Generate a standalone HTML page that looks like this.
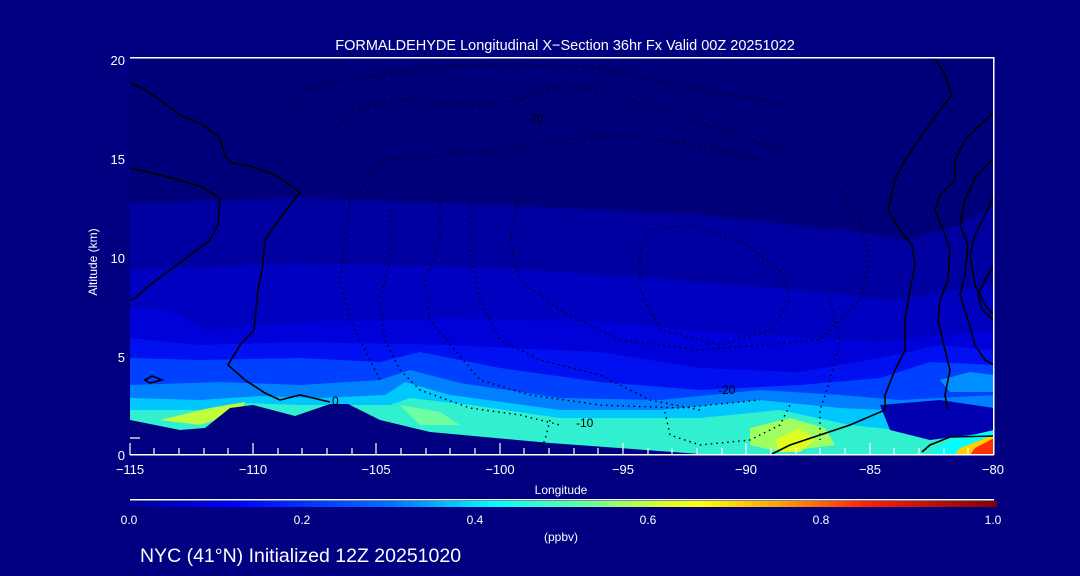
<!DOCTYPE html>
<html><head><meta charset="utf-8"><style>
html,body{margin:0;padding:0;background:#000080;width:1080px;height:576px;overflow:hidden}
svg{display:block}
text{font-family:"Liberation Sans",sans-serif;fill:#fff}
</style></head><body>
<svg width="1080" height="576" viewBox="0 0 1080 576" xmlns="http://www.w3.org/2000/svg">
<defs>
<linearGradient id="cb" x1="0" x2="1" y1="0" y2="0">
<stop offset="0" stop-color="#000090"/>
<stop offset="0.12" stop-color="#0000ff"/>
<stop offset="0.3" stop-color="#0070ff"/>
<stop offset="0.42" stop-color="#00ffff"/>
<stop offset="0.52" stop-color="#60ffa0"/>
<stop offset="0.62" stop-color="#e0ff20"/>
<stop offset="0.66" stop-color="#ffff00"/>
<stop offset="0.75" stop-color="#ffa000"/>
<stop offset="0.85" stop-color="#ff2000"/>
<stop offset="1" stop-color="#800000"/>
</linearGradient>
<clipPath id="pc"><rect x="130" y="58" width="864" height="397"/></clipPath>
</defs>
<rect width="1080" height="576" fill="#000080"/>
<g clip-path="url(#pc)">
<rect x="130" y="58" width="864" height="397" fill="#00007a"/>
<path d="M130 203 L300 198 L500 205 L700 215 L860 232 L905 240 L960 225 L994 205 L994 455 L130 455Z" fill="#0000a0"/>
<path d="M130 270 L300 263 L500 268 L650 278 L800 290 L890 300 L994 285 L994 455 L130 455Z" fill="#0000c0"/>
<path d="M130 308 L170 310 L210 330 L300 322 L450 318 L600 322 L750 335 L880 342 L994 330 L994 455 L130 455Z" fill="#0000d8"/>
<path d="M130 338 L200 345 L300 342 L450 345 L600 352 L700 368 L800 372 L880 358 L940 345 L994 350 L994 455 L130 455Z" fill="#0010f0"/>
<path d="M130 358 L200 360 L300 358 L380 362 L420 352 L500 368 L600 382 L700 390 L800 385 L880 378 L930 362 L994 365 L994 455 L130 455Z" fill="#0040ff"/>
<path d="M940 380 L970 372 L994 375 L994 392 L950 392Z" fill="#0090ff"/>
<path d="M130 385 L220 382 L300 385 L380 380 L410 370 L460 383 L560 398 L660 400 L760 390 L840 395 L900 400 L994 395 L994 455 L130 455Z" fill="#0080ff"/>
<path d="M130 398 L200 400 L260 396 L320 398 L385 395 L405 382 L450 395 L560 410 L660 410 L760 400 L840 408 L994 415 L994 455 L130 455Z" fill="#00c8ff"/>
<path d="M130 410 L200 410 L245 403 L300 405 L340 405 L390 405 L410 398 L470 405 L560 418 L700 418 L780 410 L850 425 L994 440 L994 455 L130 455Z" fill="#30f0d0"/>
<path d="M160 420 L210 408 L245 402 L240 412 L200 425Z" fill="#c0ff40"/>
<path d="M400 405 L440 412 L460 425 L420 425Z" fill="#70ffa0"/>
<path d="M750 428 L790 418 L825 428 L835 445 L780 452 L750 445Z" fill="#a0ff60"/>
<path d="M775 440 L800 428 L815 440 L800 452 L780 452Z" fill="#e0ff20"/>
<path d="M880 405 L940 400 L994 408 L994 432 L930 440 L890 430Z" fill="#0000b0"/>
<path d="M950 440 L994 430 L994 455 L930 455Z" fill="#00ffff"/>
<path d="M960 448 L994 435 L994 455 L955 455Z" fill="#ffd000"/>
<path d="M975 448 L994 438 L994 455 L970 455Z" fill="#ff3000"/>
<path d="M130 420 L180 430 L205 428 L230 408 L253 405 L295 416 L330 404 L348 404 L380 420 L430 432 L550 443 L700 454 L994 454 L994 460 L130 460Z" fill="#000080"/>
<g fill="none" stroke="#000" stroke-width="1.6">
<path d="M130 83 L142 88 L153 95 L180 115 L203 125 L220 138 L225 156 L232 163 L250 166 L275 175 L300 192 L290 205 L275 225 L265 240 L262 270 L258 290 L254 330 L240 345 L228 365 L245 380 L265 393 L280 400 L300 395 L330 402"/>
<path d="M130 168 L160 175 L200 186 L220 198 L218 225 L210 240 L190 255 L170 270 L150 285 L135 298 L130 300"/>
<path d="M935 58 L945 75 L952 95 L940 110 L922 135 L905 160 L895 180 L888 210 L900 230 L912 245 L915 265 L910 290 L905 320 L905 350 L895 370 L885 395 L885 410"/>
<path d="M994 112 L980 125 L965 140 L955 160 L955 180 L940 195 L935 210 L945 235 L950 250 L948 280 L940 300 L938 320 L945 350 L950 370 L945 395 L948 410"/>
<path d="M994 158 L975 178 L965 200 L960 225 L968 245 L965 275 L960 295 L968 320 L975 345 L985 360 L994 365"/>
<path d="M994 195 L985 215 L975 235 L970 255 L975 285 L985 305 L994 315"/>
<path d="M994 265 L985 280 L978 295 L982 310 L994 320"/>
<path d="M885 410 L850 425 L790 445 L770 455"/>
<path d="M994 436 L950 437 L930 445 L922 452"/>
<path d="M145 380 L152 376 L162 380 L150 383Z"/>
</g>
<g fill="none" stroke="#000" stroke-width="1.4" stroke-dasharray="1.5 4">
<path d="M280 120 L300 92 L350 78 L400 72 L450 65 L520 64 L600 68 L700 90 L790 105"/>
<path d="M330 140 L350 110 L400 100 L480 105 L520 100 L560 85 L600 90 L660 110 L720 130 L780 150"/>
<path d="M360 190 L380 160 L440 155 L500 150 L560 140 L620 135 L700 145 L760 160"/>
<path d="M350 200 L345 240 L340 280 L350 320 L365 350 L380 380"/>
<path d="M390 210 L390 260 L380 300 L385 340 L400 370 L420 390 L470 408 L520 415 L560 425"/>
<path d="M440 200 L440 240 L425 280 L430 320 L455 350 L480 380 L530 395 L600 405 L680 408 L760 400"/>
<path d="M470 200 L470 250 L480 300 L500 340 L540 360 L600 375 L650 400 L700 410"/>
<path d="M520 190 L510 240 L520 280 L560 310 L620 340 L700 350 L760 345 L820 340 L860 300 L870 260 L860 220 L840 190 L820 170"/>
<path d="M640 250 L650 230 L690 225 L740 240 L780 270 L790 300 L770 330 L720 345 L660 330 L640 290Z"/>
<path d="M550 420 L545 440 L540 450"/>
<path d="M665 412 L670 435 L700 445 L750 440 L780 425 L790 405"/>
<path d="M830 300 L840 340 L830 380 L820 410 L820 440"/>
</g>
</g>
<g font-size="12">
<text x="332" y="405" style="fill:#000">0</text>
<text x="576" y="427" style="fill:#000">-10</text>
<text x="718" y="394" style="fill:#000">-20</text>
<text x="526" y="123" style="fill:#000">-70</text>
</g>
<rect x="130" y="57" width="864" height="1.5" fill="#fff"/>
<rect x="993" y="57" width="1.5" height="398" fill="#fff"/>
<rect x="130" y="454" width="864" height="1.5" fill="#fff"/>
<g stroke="#fff" stroke-width="1.2">
<path d="M130 438 H140 M130 443 V455 M154 448 V455 M179 448 V455 M204 448 V455 M228 448 V455 M253 443 V455 M278 448 V455 M302 448 V455 M327 448 V455 M352 448 V455 M376 443 V455 M401 448 V455 M426 448 V455 M450 448 V455 M475 448 V455 M500 443 V455 M524 448 V455 M549 448 V455 M574 448 V455 M598 448 V455 M623 443 V455 M648 448 V455 M672 448 V455 M697 448 V455 M722 448 V455 M746 443 V455 M771 448 V455 M796 448 V455 M820 448 V455 M845 448 V455 M870 443 V455 M894 448 V455 M919 448 V455 M944 448 V455 M968 448 V455"/>
</g>
<g font-size="13" text-anchor="middle">
<text x="565" y="50" font-size="14.5">FORMALDEHYDE Longitudinal X−Section 36hr  Fx Valid 00Z 20251022</text>
<text x="130" y="474">−115</text><text x="253" y="474">−110</text><text x="376" y="474">−105</text><text x="500" y="474">−100</text><text x="623" y="474">−95</text><text x="746" y="474">−90</text><text x="870" y="474">−85</text><text x="993" y="474">−80</text>
<text x="561" y="494" font-size="12">Longitude</text>
<text x="129" y="524" font-size="12">0.0</text><text x="302" y="524" font-size="12">0.2</text><text x="475" y="524" font-size="12">0.4</text><text x="648" y="524" font-size="12">0.6</text><text x="821" y="524" font-size="12">0.8</text><text x="993" y="524" font-size="12">1.0</text>
<text x="561" y="541" font-size="12">(ppbv)</text>
</g>
<g font-size="13" text-anchor="end">
<text x="125" y="65">20</text><text x="125" y="164">15</text><text x="125" y="263">10</text><text x="125" y="362">5</text><text x="125" y="460">0</text>
</g>
<text x="0" y="0" font-size="12" text-anchor="middle" transform="translate(97 262) rotate(-90)">Altitude (km)</text>
<rect x="130" y="499" width="864" height="1.5" fill="#fff"/>
<rect x="130" y="501" width="867" height="6" fill="url(#cb)"/>
<text x="140" y="562" font-size="19.5">NYC (41°N) Initialized 12Z 20251020</text>
</svg>
</body></html>
